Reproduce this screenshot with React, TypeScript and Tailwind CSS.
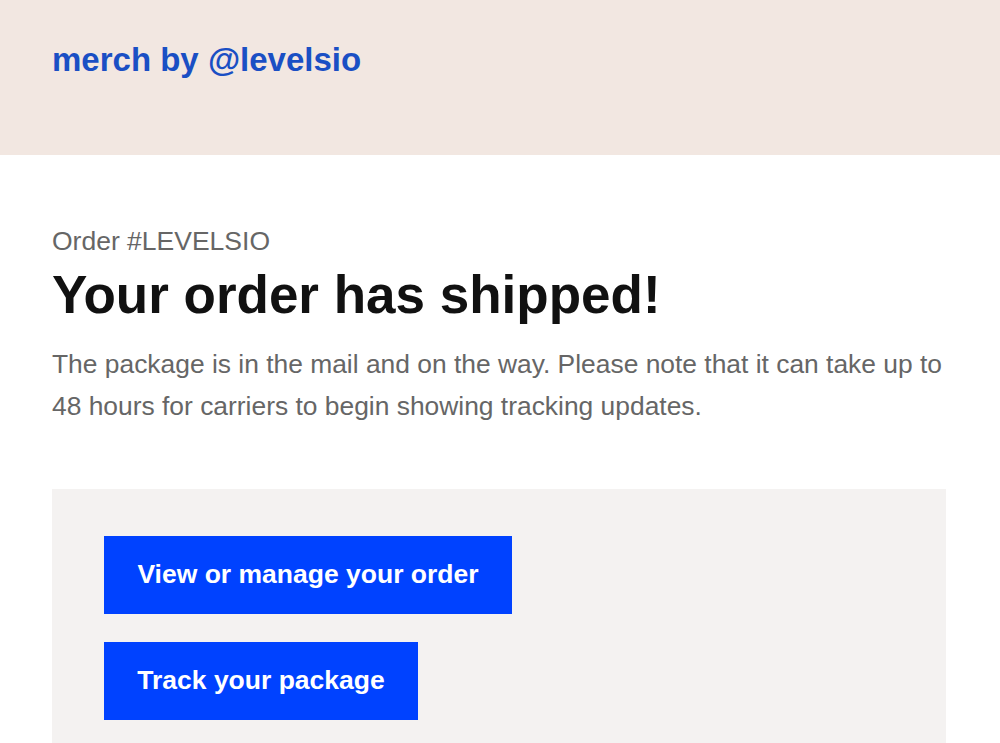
export default function App() {
  return (
    <div className="min-h-[743px] bg-white" style={{ fontFamily: '"Liberation Sans", Arial, sans-serif' }}>
      <div className="h-[155px] bg-[#f2e7e1] px-[52px] pt-[43px]">
        <div className="text-[33px] font-bold leading-none text-[#1a4fc4]">merch by @levelsio</div>
      </div>
      <div className="px-[52px]">
        <div className="mt-[73px] text-[26.5px] leading-none text-[#666666]">Order #LEVELSIO</div>
        <h1 className="mt-[13px] text-[53px] font-bold leading-none text-[#111111]">Your order has shipped!</h1>
        <p className="mt-[22px] w-[900px] text-[26.4px] leading-[42px] text-[#666666]">
          The package is in the mail and on the way. Please note that it can take up to 48 hours for carriers to begin showing tracking updates.
        </p>
        <div className="mt-[62px] flex w-[894px] flex-col items-start gap-[28px] bg-[#f4f2f1] px-[52px] pt-[47px] pb-[40px]">
          <a className="flex h-[78px] w-[408px] items-center justify-center bg-[#0042ff] text-[26.5px] font-bold leading-none text-white">
            View or manage your order
          </a>
          <a className="flex h-[78px] w-[314px] items-center justify-center bg-[#0042ff] text-[26.5px] font-bold leading-none text-white">
            Track your package
          </a>
        </div>
      </div>
    </div>
  );
}
